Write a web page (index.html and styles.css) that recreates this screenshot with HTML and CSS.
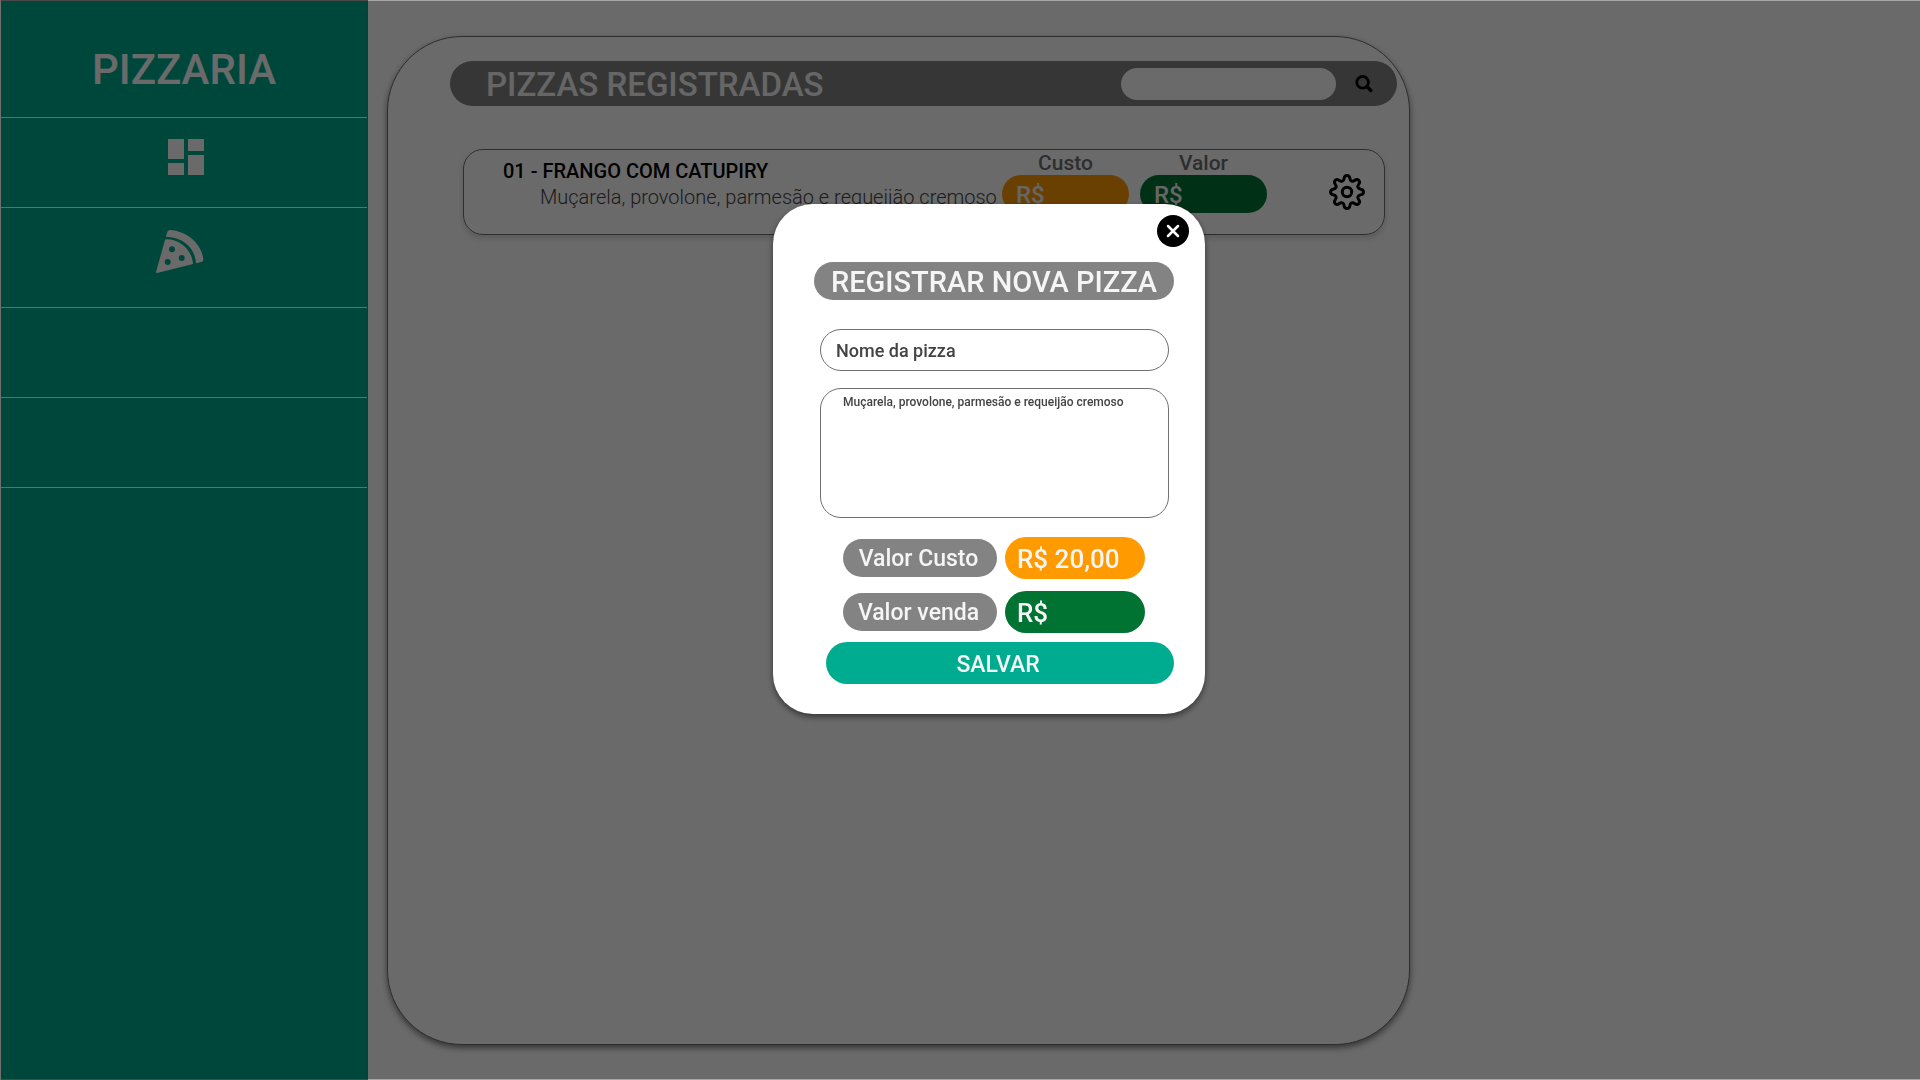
FILE: index.html
```html
<!DOCTYPE html>
<html lang="pt-BR">
<head>
  <meta charset="utf-8">
  <meta name="viewport" content="width=device-width, initial-scale=1">
  <title>Pizzaria</title>
  <link rel="stylesheet" href="styles.css">
</head>
<body>
  <div class="page">
    <aside class="sidebar">
      <h1 class="brand">PIZZARIA</h1>
      <nav>
        <ul class="menu">
          <li class="menu-item">
            <a class="menu-link" href="#painel" aria-label="Painel">
              <svg width="36" height="36" viewBox="3 3 18 18" fill="currentColor" aria-hidden="true"><path d="M3 13h8V3H3v10zm0 8h8v-6H3v6zm10 0h8V11h-8v10zm0-18v6h8V3h-8z"/></svg>
            </a>
          </li>
          <li class="menu-item menu-item-tall">
            <a class="menu-link menu-link-pizza" href="#pizzas" aria-label="Pizzas">
              <svg width="48" height="44" viewBox="0 0 48 44" fill="currentColor" aria-hidden="true"><path fill-rule="evenodd" d="M0 42 9 10Q9 9.300 10 9.300C24 9 36 20 37 34L1 43Q0 43 0 42ZM16 16.300a3 3 0 1 0 0 6 3 3 0 0 0 0-6zM25.700 25a3 3 0 1 0 0 6 3 3 0 0 0 0-6zM11.700 29a3 3 0 1 0 0 6 3 3 0 0 0 0-6z"/><path d="M10 6.700 11.500 1.500Q12 0 14 0C32 1 46 15 47.300 29Q47.500 31.500 45.500 32L40 33.300C39 17 26 7 10 6.700Z"/></svg>
            </a>
          </li>
          <li class="menu-item"></li>
          <li class="menu-item"></li>
        </ul>
      </nav>
    </aside>

    <main class="panel">
      <header class="panel-bar">
        <h2 class="panel-title">PIZZAS REGISTRADAS</h2>
        <input class="search-input" type="search" aria-label="Buscar pizza">
        <button class="icon-button" type="button" aria-label="Buscar">
          <svg width="18" height="18" viewBox="0 0 18 18" fill="none" stroke="currentColor" stroke-width="2.800" aria-hidden="true"><circle cx="7.600" cy="7.300" r="5.800"/><path stroke-width="3.400" stroke-linecap="round" d="M12.300 12l3.500 3.500"/></svg>
        </button>
      </header>

      <article class="card">
        <div class="card-text">
          <h3 class="card-title">01 - FRANGO COM CATUPIRY</h3>
          <p class="card-description">Muçarela, provolone, parmesão e requeijão cremoso</p>
        </div>
        <div class="prices">
          <div class="price">
            <span class="price-label">Custo</span>
            <span class="price-value cost">R$</span>
          </div>
          <div class="price">
            <span class="price-label">Valor</span>
            <span class="price-value sale">R$</span>
          </div>
        </div>
        <button class="icon-button" type="button" aria-label="Configurar pizza">
          <svg width="36" height="36" viewBox="-18 -18 36 36" fill="none" stroke="currentColor" stroke-width="3" stroke-linejoin="round" aria-hidden="true"><circle r="4.700"/><path d="M-2.800-13.900C-2.200-17.300 2.200-17.300 2.800-13.900C3.200-10.800 5.500-9.900 7.900-11.800C10.800-13.800 13.800-10.800 11.800-7.900C9.900-5.500 10.800-3.200 13.900-2.800C17.300-2.200 17.300 2.200 13.900 2.800C10.800 3.200 9.900 5.500 11.800 7.900C13.800 10.800 10.800 13.800 7.900 11.800C5.500 9.900 3.200 10.800 2.800 13.900C2.200 17.300-2.200 17.300-2.800 13.900C-3.200 10.800-5.500 9.900-7.900 11.800C-10.800 13.800-13.800 10.800-11.800 7.900C-9.900 5.500-10.800 3.200-13.900 2.800C-17.300 2.200-17.300-2.200-13.900-2.800C-10.800-3.200-9.900-5.500-11.800-7.900C-13.800-10.800-10.800-13.800-7.900-11.800C-5.500-9.900-3.200-10.800-2.800-13.900Z"/></svg>
        </button>
      </article>
    </main>
  </div>

  <div class="backdrop">
    <form class="modal" role="dialog" aria-modal="true" aria-labelledby="modal-title">
      <button class="close" type="button" aria-label="Fechar">
        <svg width="32" height="32" viewBox="0 0 32 32" aria-hidden="true"><circle cx="16" cy="16" r="16"/><path d="M11 11l10 10M21 11 11 21" stroke="#fff" stroke-width="2.500" stroke-linecap="round"/></svg>
      </button>
      <h2 class="modal-title" id="modal-title">REGISTRAR NOVA PIZZA</h2>
      <input class="field name-field" type="text" value="Nome da pizza" aria-label="Nome da pizza">
      <textarea class="field ingredients-field" aria-label="Ingredientes">Muçarela, provolone, parmesão e requeijão cremoso</textarea>
      <div class="value-row">
        <label class="value-label" for="cost">Valor Custo</label>
        <input class="value-input cost" id="cost" type="text" value="R$ 20,00">
      </div>
      <div class="value-row">
        <label class="value-label" for="sale">Valor venda</label>
        <input class="value-input sale" id="sale" type="text" value="R$">
      </div>
      <button class="save" type="submit">SALVAR</button>
    </form>
  </div>
</body>
</html>
```

FILE: styles.css
```css
:root {
  --teal: #00ac8f;
  --gray: #838383;
  --line: #707070;
  --light: #f5f5f5;
  --orange: #ff9b00;
  --green: #007333;
}

* {
  box-sizing: border-box;
  margin: 0;
}

body {
  background: #fff;
  color: #000;
  font-family: Roboto, "Liberation Sans", sans-serif;
  font-weight: 500;
}

button,
input,
textarea {
  border: 0;
  padding: 0;
  font: inherit;
  color: inherit;
}

.page {
  display: flex;
  min-height: 100vh;
}

/* Sidebar */
.sidebar {
  flex: 0 0 368px;
  border: 1px solid var(--line);
  background: var(--teal);
  color: #fff;
}

.brand {
  height: 117px;
  padding-top: 44px;
  border-bottom: 1px solid #fff;
  font-size: 42px;
  line-height: 50px;
  font-weight: 500;
  text-align: center;
}

.menu {
  padding: 0;
  list-style: none;
}

.menu-item {
  height: 90px;
  border-bottom: 1px solid #fff;
}

.menu-item-tall {
  height: 100px;
}

.menu-link {
  display: flex;
  justify-content: center;
  height: 100%;
  padding: 21px 0 0 4px;
  color: inherit;
}

.menu-link-pizza {
  padding: 22px 8px 0 0;
}

/* Registered pizzas */
.panel {
  flex: 0 1 1023px;
  margin: 36px 19px 35px;
  padding: 24px 12px 24px 62px;
  border: 1px solid var(--line);
  border-radius: 75px;
  background: #fff;
  box-shadow: 0 3px 6px rgba(0, 0, 0, 0.5);
}

.panel-bar {
  display: flex;
  align-items: center;
  height: 45px;
  padding: 0 24px 0 36px;
  border-radius: 23px;
  background: var(--gray);
}

.panel-title {
  flex: 1;
  padding-top: 1px;
  color: var(--light);
  font-size: 33px;
  line-height: 45px;
  font-weight: 500;
}

.search-input {
  width: 215px;
  height: 32px;
  margin-right: 19px;
  padding: 0 16px;
  border-radius: 16px;
  background: #fff;
  font-size: 18px;
}

.icon-button {
  display: flex;
  background: none;
}

.card {
  display: flex;
  align-items: center;
  height: 86px;
  margin: 43px 12px 0 13px;
  padding: 0 19px 0 39px;
  border: 1px solid var(--line);
  border-radius: 20px;
  box-shadow: 0 3px 6px rgba(0, 0, 0, 0.16);
}

.card-text {
  flex: 1;
  align-self: flex-start;
  padding-top: 8px;
  white-space: nowrap;
}

.card-title {
  font-size: 20px;
  line-height: 26px;
  font-weight: 500;
}

.card-description {
  padding-left: 37px;
  color: #444;
  font-size: 20px;
  line-height: 26px;
  font-weight: 300;
}

.prices {
  display: flex;
  align-self: flex-start;
  gap: 11px;
  margin-right: 62px;
}

.price {
  display: flex;
  flex-direction: column;
  width: 127px;
  color: var(--line);
  font-size: 21px;
}

.price-label {
  padding-top: 1px;
  line-height: 24px;
  text-align: center;
}

.price-value {
  height: 38px;
  padding-left: 14px;
  border-radius: 19px;
  color: var(--light);
  font-size: 24px;
  line-height: 40px;
}

.cost {
  background: var(--orange);
}

.sale {
  background: var(--green);
}

/* Registration dialog */
.backdrop {
  position: fixed;
  inset: 0 0 0 1px;
  display: flex;
  justify-content: center;
  align-items: flex-start;
  padding: 203px 0 40px 57px;
  overflow: auto;
  border: solid rgba(0, 0, 0, 0.35);
  border-width: 1px 0;
  background: rgba(0, 0, 0, 0.585) padding-box;
}

.modal {
  display: flex;
  flex-direction: column;
  width: 432px;
  padding: 11px 31px 30px 41px;
  border-radius: 40px;
  background: #fff;
  box-shadow: 0 3px 6px rgba(0, 0, 0, 0.5);
}

.close {
  display: flex;
  align-self: flex-end;
  margin-right: -15px;
  background: none;
}

.modal-title {
  height: 38px;
  margin-top: 15px;
  padding-top: 1px;
  border-radius: 19px;
  background: var(--gray);
  color: var(--light);
  font-size: 29px;
  line-height: 38px;
  font-weight: 500;
  text-align: center;
  white-space: nowrap;
}

.field {
  margin: 0 5px 0 6px;
  border: 1px solid var(--line);
  background: #fff;
  color: #434343;
}

.name-field {
  height: 42px;
  margin-top: 29px;
  padding: 0 15px;
  border-radius: 21px;
  font-size: 18px;
}

.ingredients-field {
  height: 130px;
  margin-top: 17px;
  padding: 6px 22px;
  border-radius: 21px;
  font-size: 12px;
  line-height: 14px;
  resize: none;
}

.value-row {
  display: flex;
  align-items: center;
  gap: 8px;
  margin: 12px 29px 0;
}

.ingredients-field + .value-row {
  margin-top: 19px;
}

.value-label {
  flex: 1;
  height: 38px;
  padding-right: 3px;
  border-radius: 19px;
  background: var(--gray);
  color: var(--light);
  font-size: 23px;
  line-height: 40px;
  text-align: center;
}

.value-input {
  width: 140px;
  height: 42px;
  padding: 2px 12px 0;
  border-radius: 21px;
  color: var(--light);
  font-size: 26px;
}

.save {
  height: 42px;
  margin: 9px 0 0 12px;
  padding: 2px 4px 0 0;
  border-radius: 21px;
  background: var(--teal);
  color: var(--light);
  font-size: 23px;
}
```
